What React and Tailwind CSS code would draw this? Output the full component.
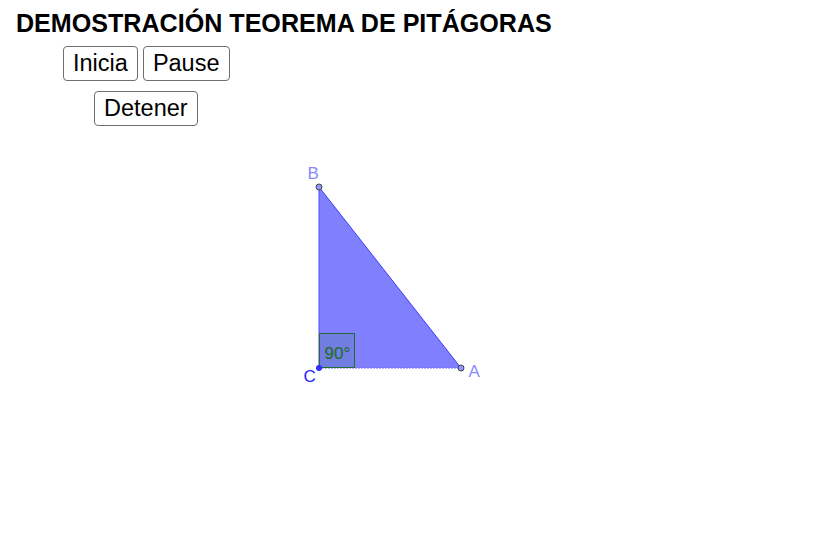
import * as React from 'react'

const ff = "font-['Liberation_Sans',Arial,sans-serif]"

function Btn({ children }) {
  return (
    <button className="h-[35px] px-[9px] bg-white border border-[#6e6e6e] rounded-[4px] text-[23.5px] leading-none text-black">
      {children}
    </button>
  )
}

function Triangle() {
  // drawn in page coordinates, offset by the viewBox
  return (
    <svg width="834" height="432" viewBox="0 126 834 432" className={`block ${ff}`}>
      <polygon points="319,187 319,368 461,368" fill="#8080ff" stroke="none" />
      <line x1="319" y1="187" x2="461" y2="368" stroke="#3c3cff" strokeWidth="1" />
      <line x1="319" y1="187" x2="319" y2="368" stroke="#4b4bff" strokeWidth="1" />
      <line x1="319" y1="368" x2="461" y2="368" stroke="#6a6aff" strokeWidth="1" strokeDasharray="2 1" />
      <rect x="319.5" y="333.5" width="35" height="34" fill="#0a6a0a" fillOpacity="0.12" stroke="#236b2e" strokeWidth="1" />
      <text x="324.5" y="359" fill="#1d6b1d" fontSize="17">90°</text>
      <circle cx="319" cy="187" r="3" fill="#9494ff" stroke="#444" strokeWidth="1" />
      <circle cx="461" cy="368" r="3" fill="#9494ff" stroke="#444" strokeWidth="1" />
      <circle cx="319" cy="368" r="3" fill="#2e2eff" />
      <text x="307.5" y="179" fill="#8a8aff" fontSize="17">B</text>
      <text x="468.5" y="377" fill="#8a8aff" fontSize="17">A</text>
      <text x="303.5" y="382" fill="#2424ff" fontSize="17">C</text>
    </svg>
  )
}

export default function App() {
  return (
    <div className={`w-[834px] h-[558px] bg-white overflow-hidden ${ff}`}>
      <h1 className="pl-[16px] pt-[10px] text-[25.1px] leading-[26px] font-bold text-black whitespace-nowrap">
        DEMOSTRACIÓN TEOREMA DE PITÁGORAS
      </h1>
      <div className="flex gap-[5px] pl-[63px] mt-[10px]">
        <Btn>Inicia</Btn>
        <Btn>Pause</Btn>
      </div>
      <div className="flex pl-[94px] mt-[10px]">
        <Btn>Detener</Btn>
      </div>
      <Triangle />
    </div>
  )
}
